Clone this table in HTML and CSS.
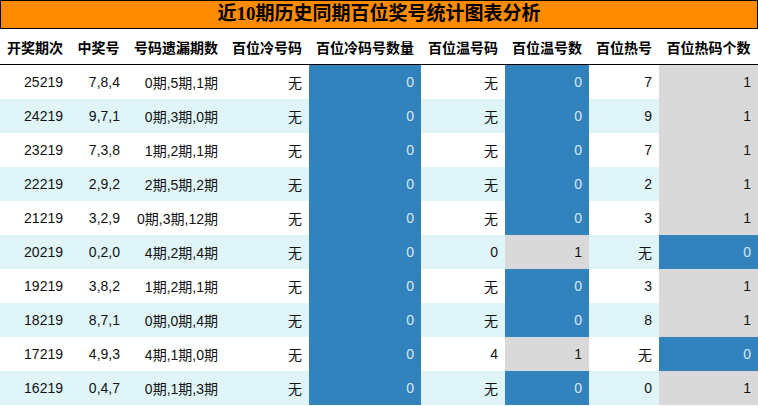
FILE: index.html
```html
<!DOCTYPE html>
<html lang="zh">
<head>
<meta charset="utf-8">
<title>近10期历史同期百位奖号统计图表分析</title>
<link rel="stylesheet" href="styles.css">
</head>
<body>
<div class="page">
  <div class="title">近10期历史同期百位奖号统计图表分析</div>
  <table class="stats">
    <colgroup>
      <col class="c1"><col class="c2"><col class="c3"><col class="c4"><col class="c5"><col class="c6"><col class="c7"><col class="c8"><col class="c9">
    </colgroup>
    <thead>
      <tr>
        <th>开奖期次</th><th>中奖号</th><th>号码遗漏期数</th><th>百位冷号码</th><th>百位冷码号数量</th><th>百位温号码</th><th>百位温号数</th><th>百位热号</th><th>百位热码个数</th>
      </tr>
    </thead>
    <tbody>
      <tr><td>25219</td><td>7,8,4</td><td>0期,5期,1期</td><td>无</td><td class="blue">0</td><td>无</td><td class="blue">0</td><td>7</td><td class="gray">1</td></tr>
      <tr class="alt"><td>24219</td><td>9,7,1</td><td>0期,3期,0期</td><td>无</td><td class="blue">0</td><td>无</td><td class="blue">0</td><td>9</td><td class="gray">1</td></tr>
      <tr><td>23219</td><td>7,3,8</td><td>1期,2期,1期</td><td>无</td><td class="blue">0</td><td>无</td><td class="blue">0</td><td>7</td><td class="gray">1</td></tr>
      <tr class="alt"><td>22219</td><td>2,9,2</td><td>2期,5期,2期</td><td>无</td><td class="blue">0</td><td>无</td><td class="blue">0</td><td>2</td><td class="gray">1</td></tr>
      <tr><td>21219</td><td>3,2,9</td><td>0期,3期,12期</td><td>无</td><td class="blue">0</td><td>无</td><td class="blue">0</td><td>3</td><td class="gray">1</td></tr>
      <tr class="alt"><td>20219</td><td>0,2,0</td><td>4期,2期,4期</td><td>无</td><td class="blue">0</td><td>0</td><td class="gray">1</td><td>无</td><td class="blue">0</td></tr>
      <tr><td>19219</td><td>3,8,2</td><td>1期,2期,1期</td><td>无</td><td class="blue">0</td><td>无</td><td class="blue">0</td><td>3</td><td class="gray">1</td></tr>
      <tr class="alt"><td>18219</td><td>8,7,1</td><td>0期,0期,4期</td><td>无</td><td class="blue">0</td><td>无</td><td class="blue">0</td><td>8</td><td class="gray">1</td></tr>
      <tr><td>17219</td><td>4,9,3</td><td>4期,1期,0期</td><td>无</td><td class="blue">0</td><td>4</td><td class="gray">1</td><td>无</td><td class="blue">0</td></tr>
      <tr class="alt"><td>16219</td><td>0,4,7</td><td>0期,1期,3期</td><td>无</td><td class="blue">0</td><td>无</td><td class="blue">0</td><td>0</td><td class="gray">1</td></tr>
    </tbody>
  </table>
</div>
</body>
</html>
```
FILE: styles.css
```css
html, body {
  margin: 0;
  padding: 0;
  background: #ffffff;
}

.page {
  width: 758px;
  font-family: "Liberation Sans", "Noto Sans CJK SC", sans-serif;
  color: #111;
}

.title {
  box-sizing: border-box;
  height: 29px;
  border: 1px solid #000;
  background: #ff8c00;
  color: #000;
  font-family: "Liberation Serif", "Noto Sans CJK SC", serif;
  font-weight: bold;
  font-size: 19px;
  line-height: 26px;
  text-align: center;
}

.stats {
  width: 758px;
  border-collapse: collapse;
  table-layout: fixed;
  font-size: 14px;
}

.c1 { width: 70px; }
.c2 { width: 57px; }
.c3 { width: 98px; }
.c4 { width: 84px; }
.c5 { width: 112px; }
.c6 { width: 84px; }
.c7 { width: 84px; }
.c8 { width: 70px; }
.c9 { width: 99px; }

.stats th {
  height: 35px;
  padding: 0;
  font-weight: bold;
  text-align: center;
  vertical-align: middle;
  border-bottom: 1px solid #000;
  white-space: nowrap;
  color: #000;
}

.stats td {
  height: 34px;
  padding: 0 7px 0 0;
  text-align: right;
  vertical-align: middle;
  white-space: nowrap;
  color: #111;
}

.stats tr.alt td {
  background: #dff5f8;
}

.stats td.blue,
.stats tr.alt td.blue {
  background: #3182bd;
  color: #dde6ee;
}

.stats td.gray,
.stats tr.alt td.gray {
  background: #d9d9d9;
}
```
